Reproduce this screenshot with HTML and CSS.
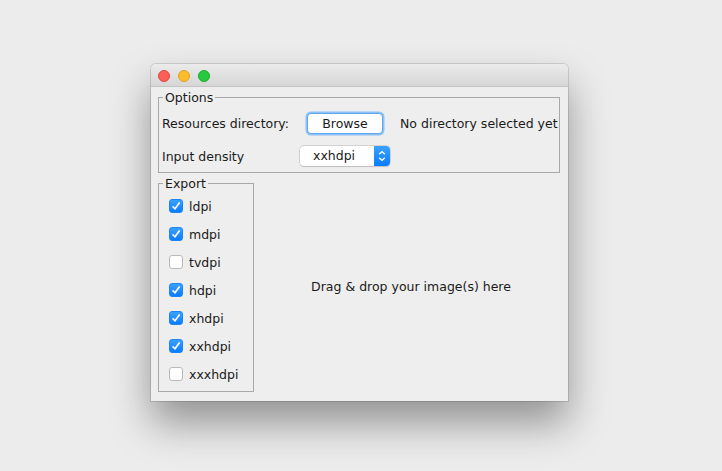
FILE: index.html
```html
<!DOCTYPE html>
<html>
<head>
<meta charset="utf-8">
<link rel="stylesheet" href="styles.css">
</head>
<body>
<div class="window">
  <div class="titlebar">
    <span class="light red"></span>
    <span class="light yellow"></span>
    <span class="light green"></span>
  </div>
  <div class="content">
    <fieldset class="group options">
      <legend>Options</legend>
      <div class="row row-res">
        <span class="label res-label">Resources directory:</span>
        <button class="button">Browse</button>
        <span class="status">No directory selected yet</span>
      </div>
      <div class="row row-density">
        <span class="label density-label">Input density</span>
        <div class="combo">
          <span class="combo-value">xxhdpi</span>
          <span class="combo-arrow">
            <svg width="8" height="12" viewBox="0 0 8 12"><path d="M1.2 4.3 L4 1.6 L6.8 4.3 M1.2 7.7 L4 10.4 L6.8 7.7" fill="none" stroke="#fff" stroke-width="1.4"/></svg>
          </span>
        </div>
      </div>
    </fieldset>
    <div class="lower">
      <fieldset class="group export">
        <legend>Export</legend>
        <label class="check"><span class="box on"><svg width="14" height="14" viewBox="0 0 14 14"><path d="M3.6 7.3 L6 9.8 L10.6 3.6" fill="none" stroke="#fff" stroke-width="1.7"/></svg></span>ldpi</label>
        <label class="check"><span class="box on"><svg width="14" height="14" viewBox="0 0 14 14"><path d="M3.6 7.3 L6 9.8 L10.6 3.6" fill="none" stroke="#fff" stroke-width="1.7"/></svg></span>mdpi</label>
        <label class="check"><span class="box"></span>tvdpi</label>
        <label class="check"><span class="box on"><svg width="14" height="14" viewBox="0 0 14 14"><path d="M3.6 7.3 L6 9.8 L10.6 3.6" fill="none" stroke="#fff" stroke-width="1.7"/></svg></span>hdpi</label>
        <label class="check"><span class="box on"><svg width="14" height="14" viewBox="0 0 14 14"><path d="M3.6 7.3 L6 9.8 L10.6 3.6" fill="none" stroke="#fff" stroke-width="1.7"/></svg></span>xhdpi</label>
        <label class="check"><span class="box on"><svg width="14" height="14" viewBox="0 0 14 14"><path d="M3.6 7.3 L6 9.8 L10.6 3.6" fill="none" stroke="#fff" stroke-width="1.7"/></svg></span>xxhdpi</label>
        <label class="check"><span class="box"></span>xxxhdpi</label>
      </fieldset>
      <div class="drop">Drag &amp; drop your image(s) here</div>
    </div>
  </div>
</div>
</body>
</html>
```

FILE: styles.css
```css
html, body {
  margin: 0;
  padding: 0;
}
body {
  background: #ececec;
  width: 722px;
  height: 471px;
  overflow: hidden;
  font-family: "DejaVu Sans", "Liberation Sans", sans-serif;
  font-size: 12.5px;
  color: #1a1a1a;
  padding-top: 64px;
  box-sizing: border-box;
}
.window {
  margin-left: 151px;
  width: 417px;
  height: 337px;
  background: #eeeeee;
  border-radius: 5px 5px 0 0;
  box-shadow: 0 22px 40px rgba(0, 0, 0, 0.38), 0 0 0 1px rgba(0, 0, 0, 0.12);
  display: flex;
  flex-direction: column;
}
.titlebar {
  height: 21px;
  border-bottom: 1px solid #c4c4c4;
  border-radius: 5px 5px 0 0;
  background: linear-gradient(#ebebeb, #d6d6d6);
  display: flex;
  align-items: center;
  gap: 8px;
  padding-left: 7px;
  padding-top: 1px;
  box-sizing: content-box;
}
.light {
  width: 12px;
  height: 12px;
  border-radius: 50%;
  box-sizing: border-box;
}
.red { background: #fc5f57; border: 1px solid #e0443e; }
.yellow { background: #fdbc2e; border: 1px solid #dea123; }
.green { background: #28c940; border: 1px solid #1aab29; }

.content {
  flex: 1;
  display: flex;
  flex-direction: column;
  padding: 3px 8px 9px 7px;
}
.group {
  margin: 0;
  border: 1px solid #a8a8a8;
  padding: 0 3px;
  min-width: 0;
}
.group legend {
  padding: 0 2px;
  margin-left: 1px;
  line-height: 15px;
}
.options {
  height: 83px;
  box-sizing: border-box;
}
.row {
  display: flex;
  align-items: center;
  white-space: nowrap;
}
.row-res {
  height: 20px;
  margin-top: 8px;
}
.row-density {
  height: 20px;
  margin-top: 13px;
}
.label {
  flex-shrink: 0;
}
.res-label {
  width: 145px;
}
.button {
  flex-shrink: 0;
  width: 76px;
  height: 21px;
  background: #ffffff;
  border: 1px solid #5ea6ef;
  box-shadow: 0 0 0 1.5px #8cc2f5;
  border-radius: 4px;
  font-family: inherit;
  font-size: 12.5px;
  color: #1a1a1a;
  padding: 0;
}
.status {
  margin-left: 17px;
}
.density-label {
  width: 138px;
}
.combo {
  width: 90px;
  height: 20px;
  display: flex;
  border-radius: 4px;
  background: #fff;
  box-shadow: 0 0 0 0.5px #b5b5b5, 0 1px 1px rgba(0,0,0,0.15);
  overflow: hidden;
}
.combo-value {
  flex: 1;
  padding-left: 13px;
  line-height: 20px;
}
.combo-arrow {
  width: 16px;
  background: linear-gradient(#3aa2ff, #0a7cff);
  display: flex;
  align-items: center;
  justify-content: center;
}

.lower {
  flex: 1;
  display: flex;
  margin-top: 3px;
}
.export {
  width: 96px;
  box-sizing: border-box;
  display: flex;
  flex-direction: column;
  padding: 1px 3px 0 3px;
}
.check {
  display: flex;
  align-items: center;
  height: 28px;
  padding-left: 7px;
}
.box {
  width: 14px;
  height: 14px;
  border-radius: 3px;
  box-sizing: border-box;
  background: #fff;
  border: 1px solid #b8b8b8;
  margin-right: 6px;
  display: flex;
}
.box.on {
  background: linear-gradient(#3aa2ff, #0a7cff);
  border-color: #1a86f5;
}
.box svg {
  margin: -1px;
}
.drop {
  flex: 1;
  display: flex;
  align-items: center;
  justify-content: center;
  padding-top: 4px;
  padding-left: 8px;
}
```
